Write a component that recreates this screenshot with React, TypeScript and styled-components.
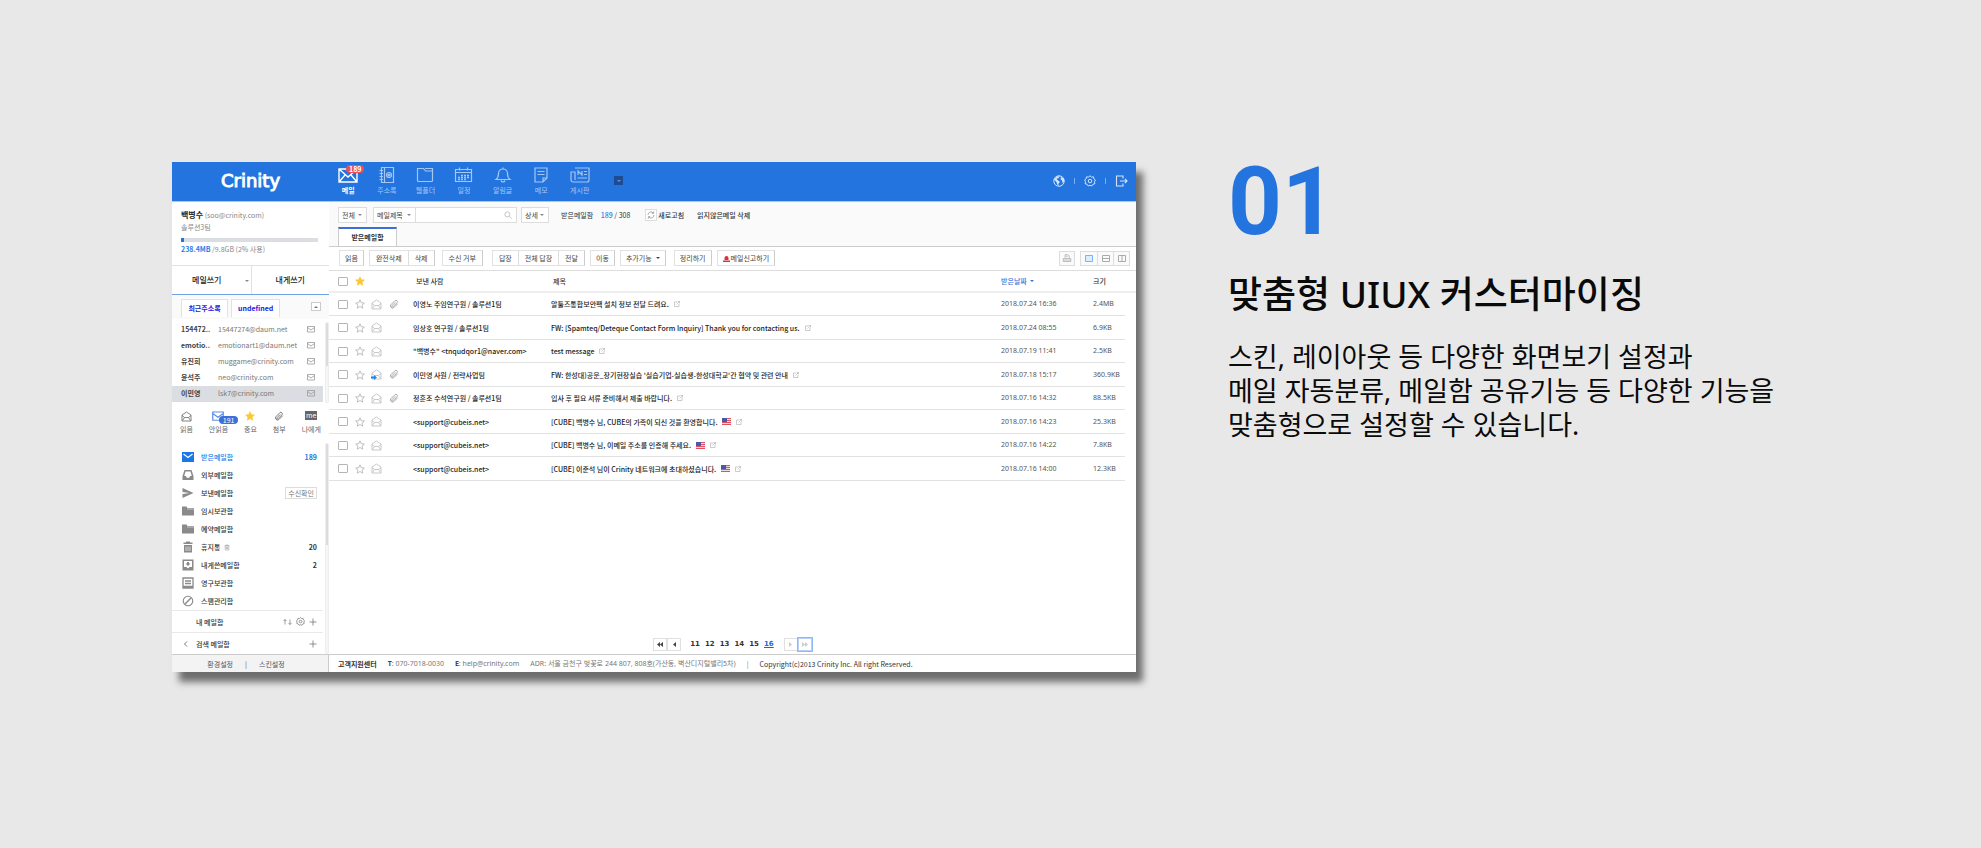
import React from "react";
import styled, { createGlobalStyle, css } from "styled-components";

const GlobalStyle = createGlobalStyle`
  *, *::before, *::after { box-sizing: border-box; }
  body { margin: 0; background: #e8e8e8; }
  body, button, input, select {
    font-family: "Noto Sans CJK KR", "Noto Sans", sans-serif;
  }
  button { cursor: pointer; }
  ul { list-style: none; margin: 0; padding: 0; }
  a { color: inherit; text-decoration: none; }
`;

const blue = "#2374de";
const latin = `"Noto Sans", "Noto Sans CJK KR", sans-serif`;

const Page = styled.main`
  display: grid;
  grid-template-columns: minmax(0, 964fr) minmax(0, 581fr);
  gap: 92px;
  align-items: start;
  min-height: 100vh;
  padding: 162px 172px 96px;
  background: #e8e8e8;
`;

const Frame = styled.section`
  display: grid;
  grid-template-columns: 157px minmax(0, 1fr);
  grid-template-rows: 40px minmax(452px, auto) 18px;
  background: #fff;
  box-shadow: 7px 10px 7px rgba(0, 0, 0, 0.53);
  font-size: 7px;
  line-height: 10px;
  color: #333;
  white-space: nowrap;
`;

/* ---------- top bar ---------- */

const TopBar = styled.header`
  grid-column: 1 / -1;
  display: flex;
  background: ${blue};
  border-bottom: 1px solid #a9c9f2;
`;

const Brand = styled.a`
  width: 157px;
  display: flex;
  align-items: center;
  justify-content: center;
  padding-bottom: 2px;
  font-family: "DejaVu Sans", sans-serif;
  font-size: 18px;
  line-height: 20px;
  color: #fff;
  -webkit-text-stroke: 1px #fff;
`;

const MainMenu = styled.nav`
  display: flex;
  width: 270px;
`;

const MenuLink = styled.a<{ $active?: boolean }>`
  position: relative;
  flex: 1;
  display: flex;
  flex-direction: column;
  align-items: center;
  gap: 2px;
  padding-top: 5px;
  color: ${(p) => (p.$active ? "#fff" : "#a4c6f3")};
  font-weight: ${(p) => (p.$active ? 700 : 400)};
`;

const RedBadge = styled.span`
  position: absolute;
  top: 3px;
  left: 17px;
  padding: 0 3px;
  border-radius: 4px;
  background: #e8505b;
  color: #fff;
  font-weight: 700;
  line-height: 8px;
`;

const MoreButton = styled.button`
  align-self: center;
  display: grid;
  place-items: center;
  width: 9px;
  height: 9px;
  margin: 0 auto 2px 15px;
  padding: 0;
  border: 0;
  background: #1d4c94;
  color: #5f93df;
`;

const Utilities = styled.div`
  display: flex;
  align-items: center;
  gap: 9px;
  padding: 0 8px 2px 0;
`;

const UtilityDivider = styled.i`
  width: 1px;
  height: 6px;
  background: #7eaeee;
`;

const IconButton = styled.button`
  display: grid;
  place-items: center;
  padding: 0;
  border: 0;
  background: none;
  color: inherit;
  font: inherit;
`;

const UtilityButton = styled(IconButton)`
  color: #d5e4f8;
`;

/* ---------- sidebar ---------- */

const Sidebar = styled.aside`
  display: flex;
  flex-direction: column;
  min-width: 0;
`;

const Profile = styled.div`
  height: 63px;
  padding: 7px 11px 0 9px;
  color: #888;
`;

const ProfileLine = styled.div`
  line-height: 12px;
`;

const UserName = styled.strong`
  font-size: 8px;
  color: #222;
`;

const Quota = styled.progress`
  display: block;
  appearance: none;
  width: 100%;
  height: 4px;
  margin: 5px 0 1px;
  border: 0;
  background: #dadee3;
  &::-webkit-progress-bar { background: #dadee3; }
  &::-webkit-progress-value { background: ${blue}; }
`;

const Used = styled.strong`
  color: #2b7fe3;
`;

const WriteBar = styled.div`
  display: grid;
  grid-template-columns: 1fr 1fr;
  height: 30px;
  border-top: 1px solid #e2e2e2;
  border-bottom: 1px solid #6fa3e4;
`;

const WriteButton = styled.button`
  position: relative;
  border: 0;
  border-left: 1px solid #e2e2e2;
  background: #fff;
  padding: 0 0 2px;
  color: #222;
  font-size: 8px;
  font-weight: 500;
  &:first-child { border-left: 0; padding-right: 9px; }
`;

const WriteCaret = styled.span`
  position: absolute;
  right: 2px;
  top: 8px;
  color: #888;
`;

const ContactTabs = styled.div`
  display: flex;
  gap: 3px;
  height: 24px;
  padding: 4px 8px 0 9px;
  background: #fafafa;
  align-items: flex-start;
`;

const ContactTab = styled.button`
  height: 18px;
  min-width: 47px;
  padding: 0 6px 2px;
  border: 1px solid #dfe2e6;
  border-bottom: 0;
  background: #fff;
  color: #1c1ce0;
  font-size: 7px;
  font-weight: 700;
`;

const FoldButton = styled(IconButton)`
  margin: 3px 0 0 auto;
  width: 10px;
  height: 9px;
  border: 1px solid #ccc;
  background: #fff;
  color: #777;
`;

const Scroller = styled.div<{ $thumb: number }>`
  display: grid;
  grid-template-columns: minmax(0, 1fr) 4px;
  column-gap: 2px;
  &::after {
    content: "";
    border: 1px solid #eee;
    border-radius: 2px;
    background: linear-gradient(#dcdcdc, #dcdcdc) no-repeat top / 100% ${(p) => p.$thumb}px, #f6f6f6;
  }
`;

const ContactScroller = styled(Scroller)`
  height: 84px;
  padding-top: 3px;
`;

const ContactRow = styled.li<{ $selected?: boolean }>`
  display: grid;
  grid-template-columns: 37px 1fr 10px;
  align-items: center;
  height: 16px;
  padding: 0 7px 2px 9px;
  background: ${(p) => (p.$selected ? "#dadde1" : "transparent")};
  color: #777;
  b { color: #444; }
  button { color: #999; }
`;

const Filters = styled.div`
  display: flex;
  justify-content: space-between;
  height: 40px;
  padding: 8px 8px 0;
`;

const FilterButton = styled.button`
  position: relative;
  display: flex;
  flex-direction: column;
  align-items: center;
  justify-content: space-between;
  height: 23px;
  padding: 0;
  border: 0;
  background: none;
  color: #666;
  font-size: 7px;
  line-height: 10px;
`;

const UnreadTone = styled.span`
  display: flex;
  color: #5a8de6;
`;

const MeTag = styled.span`
  width: 12px;
  background: #666;
  color: #fff;
  line-height: 9px;
`;

const BlueBadge = styled.span`
  position: absolute;
  top: 5px;
  left: 10px;
  padding: 0 4px;
  border-radius: 4px;
  background: #3a6fdc;
  color: #fff;
  line-height: 8px;
`;

const FolderScroller = styled(Scroller)`
  flex: 1;
`;

const FolderList = styled.ul`
  padding-top: 5px;
  height: 167px;
`;

const FolderLink = styled.a<{ $active?: boolean }>`
  display: flex;
  align-items: center;
  gap: 7px;
  height: 18px;
  padding: 0 6px 0 10px;
  font-weight: 500;
  color: ${(p) => (p.$active ? "#1a78e6" : "#333")};
`;

const FolderIcon = styled.span<{ $active?: boolean }>`
  display: flex;
  color: ${(p) => (p.$active ? "#1a78e6" : "#8a8a8a")};
`;

const FolderName = styled.span`
  display: flex;
  align-items: center;
  gap: 4px;
  margin-right: auto;
`;

const ReceiptTag = styled.span`
  padding: 0 2px;
  border: 1px solid #ddd;
  color: #777;
  font-weight: 400;
`;

const GroupRow = styled.div`
  display: flex;
  align-items: center;
  gap: 4px;
  height: 22px;
  padding: 0 6px 0 11px;
  border-top: 1px solid #e8e8e8;
  font-weight: 500;
  color: #777;
`;

const GroupName = styled.span`
  margin-right: auto;
  color: #333;
`;

const Fold = styled.span`
  width: 9px;
  display: flex;
`;

const SideFooter = styled.div`
  display: flex;
  align-items: center;
  justify-content: center;
  gap: 12px;
  padding: 0 8px 0 0;
  border-top: 1px solid #ccc;
  border-right: 1px solid #ccc;
  background: #f3f3f3;
  color: #555;
`;

/* ---------- mail list ---------- */

const Content = styled.section`
  display: flex;
  flex-direction: column;
  min-width: 0;
`;

const SearchArea = styled.div`
  height: 45px;
  padding: 5px 9px 0;
  background: #fafafa;
  border-bottom: 1px solid #ccc;
`;

const SearchRow = styled.form`
  display: flex;
  align-items: center;
  height: 16px;
`;

const SelectBox = styled.label<{ $width: number }>`
  position: relative;
  display: flex;
  align-items: flex-start;
  width: ${(p) => p.$width}px;
  height: 16px;
  border: 1px solid #ddd;
  background: #fff;
  color: #888;
  svg { position: absolute; right: 4px; top: 5px; pointer-events: none; }
  select {
    appearance: none;
    width: 100%;
    height: 13px;
    border: 0;
    padding: 0 3px;
    background: transparent;
    font-size: 7px;
    color: #444;
  }
`;

const SearchField = styled.label`
  display: flex;
  align-items: center;
  width: 101px;
  height: 16px;
  margin-right: 4px;
  padding-right: 4px;
  border: 1px solid #ddd;
  border-left: 0;
  background: #fff;
  color: #aaa;
  input {
    flex: 1;
    min-width: 0;
    border: 0;
    outline: 0;
    padding: 0 4px;
    font-size: 7px;
    background: none;
  }
`;

const Gap = styled.span`
  width: 6px;
`;

const Count = styled.span`
  margin: 0 15px 0 12px;
  b { margin-left: 6px; font-weight: 500; color: #2b84e0; }
`;

const RefreshButton = styled(IconButton)`
  display: flex;
  align-items: center;
  gap: 1px;
  margin-right: 13px;
  font-weight: 500;
  span {
    display: grid;
    place-items: center;
    width: 12px;
    height: 12px;
    border: 1px solid #ddd;
    background: #fff;
    color: #888;
  }
`;

const TextButton = styled(IconButton)`
  font-weight: 500;
`;

const MailTab = styled.button`
  display: block;
  width: 59px;
  height: 19px;
  margin-top: 4px;
  padding: 0 0 1px;
  border: 1px solid #ccc;
  border-top: 2px solid #3d6fd8;
  border-bottom: 0;
  background: #fff;
  color: #333;
  font-size: 7px;
  font-weight: 700;
`;

const ActionBar = styled.div`
  display: flex;
  align-items: center;
  gap: 5px;
  height: 24px;
  padding: 0 6px 1px 10px;
  border-bottom: 1px solid #ddd;
`;

const ActionGroup = styled.div<{ $after?: number; $roomy?: boolean }>`
  display: flex;
  margin-right: ${(p) => p.$after ?? 0}px;
  border: 1px solid #e2e2e2;
  border-right-color: #ccc;
  button { padding: 0 ${(p) => (p.$roomy ? 6 : 5)}px; }
`;

const ActionButton = styled.button`
  display: flex;
  align-items: center;
  gap: 1px;
  height: 14px;
  border: 0;
  background: #fff;
  color: #444;
  font-size: 7px;
  line-height: 10px;
  & + & { border-left: 1px solid #ddd; }
`;

const ViewSwitch = styled.div<{ $first?: boolean }>`
  display: flex;
  margin-left: ${(p) => (p.$first ? "auto" : "0")};
  border: 1px solid #ddd;
`;

const ViewButton = styled.button<{ $on?: boolean }>`
  display: grid;
  place-items: center;
  width: ${(p) => (p.$on === undefined ? 14 : 16)}px;
  height: 13px;
  padding: 0;
  border: 0;
  background: #fafafa;
  color: ${(p) => (p.$on ? "#74b5fb" : "#aaa")};
  & + & { border-left: 1px solid #ddd; }
`;

const TableWrap = styled.div`
  flex: 1;
`;

const MailTable = styled.table`
  width: 100%;
  table-layout: fixed;
  border-collapse: separate;
  border-spacing: 0;
  th, td { padding: 0; text-align: left; }
  th { height: 22px; font-weight: 500; border-bottom: 2px solid #eee; }
`;

const Row = styled.tr`
  height: 24px;
  &:nth-child(odd) { height: 23px; }
  td { border-bottom: 1px solid #e2e2e2; color: #555; }
  td:last-child { border: 0; }
`;

const NumberCell = styled.td`
  font-family: ${latin};
`;

const Center = styled.span`
  display: flex;
  align-items: center;
  height: 12px;
  color: #bbb;
`;

const Check = styled.input`
  display: block;
  appearance: none;
  width: 10px;
  height: 9px;
  margin: 0;
  border: 1px solid #b5b5b5;
  border-radius: 1px;
  background: #fff;
`;

const MailLink = styled.a`
  display: flex;
  align-items: center;
  gap: 5px;
  color: #222;
  font-weight: 500;
`;

const SortButton = styled(IconButton)`
  display: flex;
  align-items: center;
  gap: 3px;
  color: #3d6fd8;
`;

const Pager = styled.nav`
  display: flex;
  justify-content: center;
  align-items: center;
  gap: 5px;
  height: 14px;
  margin-bottom: 3px;
  font-family: "DejaVu Sans", sans-serif;
  font-weight: 700;
`;

const PageButtons = styled.div`
  display: flex;
  margin: 0 4px 0 0;
  &:last-child { margin: 0 0 0 5px; }
`;

const PageButton = styled.button<{ $off?: boolean; $focus?: boolean }>`
  display: grid;
  place-items: center;
  width: 14px;
  height: 13px;
  padding: 0;
  border: 1px solid #e0e0e0;
  background: #fff;
  color: ${(p) => (p.$off ? "#ccc" : "#444")};
  ${(p) => p.$focus && css`outline: 1px solid #8fb8f5; border-color: #b5d0fa;`}
`;

const PageLink = styled.a<{ $current?: boolean }>`
  color: ${(p) => (p.$current ? "#1a66d6" : "#333")};
  text-decoration: ${(p) => (p.$current ? "underline" : "none")};
`;

const Footer = styled.footer`
  display: flex;
  align-items: center;
  gap: 11px;
  padding-left: 9px;
  border-top: 1px solid #ccc;
  color: #777;
  strong { color: #333; }
  b { color: #444; }
`;

const Contact = styled.span`
  font-family: ${latin};
`;

const Copyright = styled.span`
  color: #333;
`;

/* ---------- right-hand copy ---------- */

const Copy = styled.section`
  font-family: ${latin};
  color: #0a0a0a;
`;

const Step = styled.p`
  margin: 0;
  font-family: Roboto, "Noto Sans", sans-serif;
  font-size: 94px;
  line-height: 80px;
  font-weight: 700;
  color: ${blue};
`;

const Title = styled.h2`
  margin: 26px 0 0;
  font-size: 37px;
  line-height: 52px;
  font-weight: 500;
  white-space: nowrap;
`;

const Body = styled.p`
  margin: 20px 0 0;
  font-size: 27px;
  line-height: 34px;
  white-space: nowrap;
`;

/* ---------- icons ---------- */

type IconProps = { w?: number; h?: number; box?: string; children: React.ReactNode; fill?: boolean; sw?: number };
const Icon = ({ w = 12, h = 12, box = "0 0 24 24", children, fill, sw = 2 }: IconProps) => (
  <svg width={w} height={h} viewBox={box} aria-hidden="true"
    fill={fill ? "currentColor" : "none"} stroke={fill ? "none" : "currentColor"} strokeWidth={sw}>
    {children}
  </svg>
);

const Caret = ({ up }: { up?: boolean }) => (
  <Icon w={4} h={4} box="0 0 8 8" fill><path d={up ? "M0 6h8L4 2z" : "M0 2h8L4 6z"} /></Icon>
);
const menuBox = { w: 20, h: 16, box: "0 0 20 16", sw: 1.2 };
const menuIcons: Record<string, React.ReactNode> = {
  mail: <Icon {...menuBox} sw={1.4}><path d="M1 2h18v13H1zM1 2l9 8 9-8M1 15l6-7M19 15l-6-7" /></Icon>,
  book: <Icon {...menuBox}><path d="M4.500 .5h12v15h-12zM7.500 .5v15M2.500 3.500h3.500M2.500 6.500h3.500M2.500 9.500h3.500M2.500 12.500h3.500" /><circle cx="12" cy="8" r="2.500" /><circle cx="12" cy="8" r="1" fill="currentColor" /></Icon>,
  folder: <Icon {...menuBox}><path d="M2.500 1.500h6l2 2.500h7v9.500a1 1 0 0 1-1 1h-13a1 1 0 0 1-1-1zM10 1.500h7.500v2.500" /></Icon>,
  calendar: <Icon {...menuBox}><path d="M1.500 2.500h16v12h-16zM1.500 5.500h16M5.500 .5v3M13.500 .5v3" /><path d="M7 8.500h9M4 10.500h12M4 12.500h9" strokeDasharray="2 1" strokeWidth="1.300" /></Icon>,
  bell: <Icon {...menuBox}><path d="M3 12.500h14c-2-1.500-2.500-3-2.500-6C14.500 3.500 12.500 2 10 2S5.500 3.500 5.500 6.500c0 3-.5 4.500-2.500 6zM10 2V.5M8 13.500c.5 2 3.500 2 4 0" /></Icon>,
  memo: <Icon {...menuBox}><path d="M4 1h12v10l-4 4H4zM16 11h-4v4M6.500 4.500h7M6.500 7.500h7" /></Icon>,
  board: <Icon {...menuBox}><path d="M5 1h14v12a2 2 0 0 1-2 2H3a2 2 0 0 1-2-2V5h4v8M8 8V4l4 4V4M14 4.500h3M14 7.500h3M7.500 11h9.500" /></Icon>,
};
const Letter = () => (
  <Icon w={11} h={11} box="0 0 22 22"><path d="M2 8l9-6 9 6v12H2zM2 9l5 4h8l5-4M7 13l-4 6M15 13l4 6" strokeWidth="1.600" /></Icon>
);
const Envelope = ({ w = 8, h = 7 }: { w?: number; h?: number }) => (
  <Icon w={w} h={h} box="0 0 16 14" sw={1.6}><path d="M1 1h14v11H1zM1 3l7 5 7-5" /></Icon>
);
const starPath = "M12 2l3 7 7.500.7-5.700 5 1.700 7.300-6.500-4-6.500 4 1.700-7.300-5.700-5L9 9z";
const Star = ({ on }: { on?: boolean }) => (
  <svg width="10" height="10" viewBox="0 0 24 24" aria-hidden="true" fill={on ? "#fbc934" : "none"} stroke={on ? "#fbc934" : "#aaa"} strokeWidth="1.800"><path d={starPath} /></svg>
);
const Clip = () => (
  <Icon w={10} h={11}><path d="M21 10l-9.500 9.500a5 5 0 0 1-7-7L14 3a3.500 3.500 0 0 1 5 5l-9.500 9.500a1.700 1.700 0 0 1-2.500-2.500L15 7" /></Icon>
);
const Gear = ({ s = 12 }: { s?: number }) => (
  <Icon w={s} h={s}><path d="M12 1.500l3 2.500 4-.2.8 3.900 3 2.300-1.800 3.500.8 3.900-3.800 1.100L15.500 22 12 20.500 8.500 22 6 18.500l-3.800-1.100.8-3.900L1.200 10l3-2.300L5 3.800l4 .2z" /><circle cx="12" cy="12" r="3.500" /></Icon>
);
const Popup = () => (
  <Icon w={6} h={6} box="0 0 12 12" sw={1.2}><path d="M6 2H1v9h9V6M7 1h4v4M11 1L5 7" stroke="#aaa" /></Icon>
);
const Flag = () => (
  <svg width="9" height="7" viewBox="0 0 18 14" role="img" aria-label="US">
    <path d="M0 0h18v14H0z" fill="#f4d9dc" />
    <path d="M0 1h18M0 5h18M0 9h18M0 13h18" stroke="#e0525f" strokeWidth="2" />
    <path d="M0 0h10v8H0z" fill="#4b57a8" />
  </svg>
);
const Plus = () => <Icon w={8} h={8} box="0 0 16 16" sw={1.6}><path d="M8 1v14M1 8h14" /></Icon>;

const folderIcons: Record<string, React.ReactNode> = {
  inbox: <Icon fill><path d="M0 2h24v20H0z" /><path d="M3 6l9 7 9-7" fill="none" stroke="#fff" strokeWidth="2.500" /></Icon>,
  outside: <Icon fill><path d="M5 2h14l4 12v8H1v-8zM7 5L4.500 14H8a4 4 0 0 0 8 0h3.500L17 5z" fillRule="evenodd" /></Icon>,
  sent: <Icon fill><path d="M1 2l22 10L1 22v-8l14-2-14-2z" /></Icon>,
  folder: <Icon fill><path d="M0 3h9l2 3h13v15H0z" /><path d="M10 8h14" stroke="#fff" strokeWidth="1" /></Icon>,
  trash: <Icon fill><path d="M3 3h5V1h8v2h5v3H3zM4 8h16v15H4z" /><path d="M8 11v9M12 11v9M16 11v9" stroke="#fff" strokeWidth="1.300" /></Icon>,
  self: <Icon fill><path d="M1 1h22v22H1zM4 4v12h5l3 3 3-3h5V4zM10 6h4v3h3l-5 5-5-5h3z" fillRule="evenodd" /></Icon>,
  archive: <Icon sw={2.6}><path d="M2 2h20v20H2zM6 8h12M6 13h12M3 19h18" /></Icon>,
  spam: <Icon sw={2.2}><circle cx="12" cy="12" r="9.500" /><path d="M6 18L18 6" strokeWidth="3" /></Icon>,
};

/* ---------- data ---------- */

const menu = [
  ["mail", "메일"], ["book", "주소록"], ["folder", "웹폴더"], ["calendar", "일정"],
  ["bell", "알림글"], ["memo", "메모"], ["board", "게시판"],
];
const contacts = [
  ["154472..", "15447274@daum.net"], ["emotio..", "emotionart1@daum.net"],
  ["유진희", "muggame@crinity.com"], ["윤석주", "neo@crinity.com"], ["이민영", "lsk7@crinity.com"],
];
const folders: { icon: string; name: string; count?: number; tag?: string }[] = [
  { icon: "inbox", name: "받은메일함", count: 189 },
  { icon: "outside", name: "외부메일함" },
  { icon: "sent", name: "보낸메일함", tag: "수신확인" },
  { icon: "folder", name: "임시보관함" },
  { icon: "folder", name: "예약메일함" },
  { icon: "trash", name: "휴지통", count: 20 },
  { icon: "self", name: "내게쓴메일함", count: 2 },
  { icon: "archive", name: "영구보관함" },
  { icon: "spam", name: "스팸관리함" },
];
type Mail = { from: string; subject: string; date: string; size: string; clip?: boolean; fwd?: boolean; flag?: boolean };
const mails: Mail[] = [
  { from: "이영노 주임연구원 / 솔루션1팀", subject: "알툴즈통합보안팩 설치 정보 전달 드려요.", date: "2018.07.24 16:36", size: "2.4MB", clip: true },
  { from: "임상호 연구원 / 솔루션1팀", subject: "FW: [Spamteq/Deteque Contact Form Inquiry] Thank you for contacting us.", date: "2018.07.24 08:55", size: "6.9KB" },
  { from: "\"백병수\" <tnqudqor1@naver.com>", subject: "test message", date: "2018.07.19 11:41", size: "2.5KB" },
  { from: "이민영 사원 / 전략사업팀", subject: "FW: 한성대)공문_장기현장실습 '실습기업-실습생-한성대학교'간 협약 및 관련 안내", date: "2018.07.18 15:17", size: "360.9KB", clip: true, fwd: true },
  { from: "정훈조 수석연구원 / 솔루션1팀", subject: "입사 후 필요 서류 준비해서 제출 바랍니다.", date: "2018.07.16 14:32", size: "88.5KB", clip: true },
  { from: "<support@cubeis.net>", subject: "[CUBE] 백병수 님, CUBE의 가족이 되신 것을 환영합니다.", date: "2018.07.16 14:23", size: "25.3KB", flag: true },
  { from: "<support@cubeis.net>", subject: "[CUBE] 백병수 님, 이메일 주소를 인증해 주세요.", date: "2018.07.16 14:22", size: "7.8KB", flag: true },
  { from: "<support@cubeis.net>", subject: "[CUBE] 이준석 님이 Crinity 네트워크에 초대하셨습니다.", date: "2018.07.16 14:00", size: "12.3KB", flag: true },
];

/* ---------- sections ---------- */

const Header = () => (
  <TopBar>
    <Brand href="#">Crinity</Brand>
    <MainMenu>
      {menu.map(([icon, label], i) => (
        <MenuLink key={icon} href="#" $active={i === 0}>
          {menuIcons[icon]}
          {label}
          {i === 0 && <RedBadge>189</RedBadge>}
        </MenuLink>
      ))}
    </MainMenu>
    <MoreButton aria-label="더보기"><Caret /></MoreButton>
    <Utilities>
      <UtilityButton aria-label="언어">
        <Icon><circle cx="12" cy="12" r="10.500" /><path d="M2 9l5 5 1 4 3 4v-5l3-3-5-4-2-2 4-2 3-4-6 1zM16 4l-1 4 3 3 1 5 3-3V8z" fill="currentColor" stroke="none" /></Icon>
      </UtilityButton>
      <UtilityDivider />
      <UtilityButton aria-label="설정"><Gear /></UtilityButton>
      <UtilityDivider />
      <UtilityButton aria-label="로그아웃">
        <Icon w={13} sw={2.2}><path d="M15 7V2H2v20h13v-5M9 12h14M19 8l4 4-4 4" /></Icon>
      </UtilityButton>
    </Utilities>
  </TopBar>
);

const Side = () => (
  <Sidebar>
    <Profile>
      <ProfileLine><UserName>백병수</UserName> (soo@crinity.com)</ProfileLine>
      <ProfileLine>솔루션3팀</ProfileLine>
      <Quota value={2} max={100} aria-label="메일 용량" />
      <ProfileLine><Used>238.4MB</Used> /9.8GB (2% 사용)</ProfileLine>
    </Profile>
    <WriteBar>
      <WriteButton>메일쓰기<WriteCaret><Caret /></WriteCaret></WriteButton>
      <WriteButton>내게쓰기</WriteButton>
    </WriteBar>
    <ContactTabs>
      <ContactTab>최근주소록</ContactTab>
      <ContactTab>undefined</ContactTab>
      <FoldButton aria-label="접기"><Caret up /></FoldButton>
    </ContactTabs>
    <ContactScroller $thumb={43}>
      <ul>
        {contacts.map(([name, mail], i) => (
          <ContactRow key={mail} $selected={i === 4}>
            <b>{name}</b>
            <span>{mail}</span>
            <IconButton aria-label={`${name}에게 쓰기`}><Envelope /></IconButton>
          </ContactRow>
        ))}
      </ul>
    </ContactScroller>
    <Filters>
      <FilterButton><Letter />읽음</FilterButton>
      <FilterButton><UnreadTone><Envelope w={12} h={11} /></UnreadTone><BlueBadge>191</BlueBadge>안읽음</FilterButton>
      <FilterButton><Star on />중요</FilterButton>
      <FilterButton><Clip />첨부</FilterButton>
      <FilterButton><MeTag>me</MeTag>나에게</FilterButton>
    </Filters>
    <FolderScroller $thumb={101}>
      <div>
        <FolderList>
          {folders.map((f, i) => (
            <li key={f.name}>
              <FolderLink href="#" $active={i === 0}>
                <FolderIcon $active={i === 0}>{folderIcons[f.icon]}</FolderIcon>
                <FolderName>
                  {f.name}
                  {f.icon === "trash" && <Icon w={6} h={7} sw={2.4}><path d="M2 5h20M8 5V2h8v3M5 5v17h14V5M10 9v9M14 9v9" stroke="#999" /></Icon>}
                </FolderName>
                {f.tag && <ReceiptTag>{f.tag}</ReceiptTag>}
                {f.count && <b>{f.count}</b>}
              </FolderLink>
            </li>
          ))}
        </FolderList>
        <GroupRow>
          <Fold />
          <GroupName>내 메일함</GroupName>
          <Icon w={9} h={6} box="0 0 18 12" sw={1.4}><path d="M4 11V1M1 4l3-3 3 3M14 1v10M11 8l3 3 3-3" /></Icon>
          <Gear s={9} />
          <IconButton aria-label="메일함 추가"><Plus /></IconButton>
        </GroupRow>
        <GroupRow>
          <Fold><Icon w={6} h={6} box="0 0 12 12"><path d="M8 1L3 6l5 5" /></Icon></Fold>
          <GroupName>검색 메일함</GroupName>
          <IconButton aria-label="검색 메일함 추가"><Plus /></IconButton>
        </GroupRow>
      </div>
    </FolderScroller>
  </Sidebar>
);

const Forwarded = styled.span`
  position: absolute;
  margin-top: 6px;
  display: flex;
  color: #1a86f0;
`;

const ClipTone = styled.span`
  display: flex;
  color: #999;
`;

const HeadText = styled.span<{ $inset?: boolean }>`
  padding-left: ${(p) => (p.$inset ? 3 : 2)}px;
`;

const CheckSlot = styled.span`
  display: block;
  padding-left: 9px;
`;

const CheckCell = ({ label }: { label: string }) => (
  <CheckSlot><Check type="checkbox" aria-label={label} /></CheckSlot>
);

const MailList = () => (
  <Content>
    <SearchArea>
      <SearchRow>
        <SelectBox $width={29}><select aria-label="범위"><option>전체</option></select><Caret /></SelectBox>
        <Gap />
        <SelectBox $width={43}><select aria-label="검색 항목"><option>메일제목</option></select><Caret /></SelectBox>
        <SearchField>
          <input type="text" aria-label="검색어" />
          <Icon w={8} h={8}><circle cx="10" cy="10" r="7.500" /><path d="M16 16l7 7" /></Icon>
        </SearchField>
        <SelectBox $width={28}><select aria-label="상세 검색"><option>상세</option></select><Caret /></SelectBox>
        <Count>받은메일함 <b>189</b> / 308</Count>
        <RefreshButton type="button">
          <span><Icon w={8} h={8}><path d="M3 12a9 9 0 0 1 16-6M21 12a9 9 0 0 1-16 6M20 1v6h-6M4 23v-6h6" /></Icon></span>
          새로고침
        </RefreshButton>
        <TextButton type="button">읽지않은메일 삭제</TextButton>
      </SearchRow>
      <MailTab>받은메일함</MailTab>
    </SearchArea>
    <ActionBar>
      <ActionGroup><ActionButton>읽음</ActionButton></ActionGroup>
      <ActionGroup $after={2} $roomy><ActionButton>완전삭제</ActionButton><ActionButton>삭제</ActionButton></ActionGroup>
      <ActionGroup $after={4} $roomy><ActionButton>수신 거부</ActionButton></ActionGroup>
      <ActionGroup $roomy><ActionButton>답장</ActionButton><ActionButton>전체 답장</ActionButton><ActionButton>전달</ActionButton></ActionGroup>
      <ActionGroup><ActionButton>이동</ActionButton></ActionGroup>
      <ActionGroup $after={3}><ActionButton>추가기능&nbsp;&nbsp;<Caret /></ActionButton></ActionGroup>
      <ActionGroup><ActionButton>정리하기</ActionButton></ActionGroup>
      <ActionGroup>
        <ActionButton>
          <svg width="7" height="7" viewBox="0 0 14 14" aria-hidden="true" fill="#d8323a"><path d="M3 10V6a4 4 0 0 1 8 0v4zM0 11h14v3H0z" /></svg>
          메일신고하기
        </ActionButton>
      </ActionGroup>
      <ViewSwitch $first>
        <ViewButton aria-label="인쇄"><Icon w={10} h={9} sw={2}><path d="M7 10V2h8l3 3v5M2 20v-8h20v8zM2 16h20M9 6h5" /></Icon></ViewButton>
      </ViewSwitch>
      <ViewSwitch>
        <ViewButton $on aria-label="목록"><Icon w={8} h={7} box="0 0 8 7" sw={1}><path d="M.5 .5h7v6h-7z" fill="#dcedfe" /></Icon></ViewButton>
        <ViewButton $on={false} aria-label="상하 분할"><Icon w={8} h={7} box="0 0 8 7" sw={1}><path d="M.5 .5h7v6h-7zM.5 3.500h7" /></Icon></ViewButton>
        <ViewButton $on={false} aria-label="좌우 분할"><Icon w={8} h={7} box="0 0 8 7" sw={1}><path d="M.5 .5h7v6h-7zM4 .5v6" /></Icon></ViewButton>
      </ViewSwitch>
    </ActionBar>
    <TableWrap>
      <MailTable>
        <colgroup>
          <col style={{ width: 26 }} /><col style={{ width: 16 }} /><col style={{ width: 18 }} /><col style={{ width: 24 }} />
          <col style={{ width: 138 }} /><col /><col style={{ width: 92 }} /><col style={{ width: 32 }} /><col style={{ width: 11 }} />
        </colgroup>
        <thead>
          <tr>
            <th><CheckCell label="전체 선택" /></th>
            <th><Center><Star on /></Center></th>
            <th /><th />
            <th><HeadText $inset>보낸 사람</HeadText></th>
            <th><HeadText>제목</HeadText></th>
            <th><SortButton>받은날짜 <Caret /></SortButton></th>
            <th>크기</th>
            <th />
          </tr>
        </thead>
        <tbody>
          {mails.map((m) => (
            <Row key={m.date}>
              <td><CheckCell label={m.subject} /></td>
              <td><Center><Star /></Center></td>
              <td><Center><Letter />{m.fwd && <Forwarded><Icon w={6} h={5} box="0 0 12 10" fill><path d="M0 3h6V0l6 5-6 5V7H0z" /></Icon></Forwarded>}</Center></td>
              <td><Center>{m.clip && <ClipTone><Clip /></ClipTone>}</Center></td>
              <td><MailLink href="#">{m.from}</MailLink></td>
              <td><MailLink href="#">{m.subject}{m.flag && <Flag />}<Popup /></MailLink></td>
              <NumberCell>{m.date}</NumberCell>
              <NumberCell>{m.size}</NumberCell>
              <td />
            </Row>
          ))}
        </tbody>
      </MailTable>
    </TableWrap>
    <Pager>
      <PageButtons>
        <PageButton aria-label="처음"><Icon w={6} h={5} box="0 0 12 10" fill><path d="M6 0v10L0 5zM12 0v10L6 5z" /></Icon></PageButton>
        <PageButton aria-label="이전"><Icon w={5} h={5} box="0 0 10 10" fill><path d="M8 0v10L2 5z" /></Icon></PageButton>
      </PageButtons>
      {[11, 12, 13, 14, 15, 16].map((n) => <PageLink key={n} href="#" $current={n === 16}>{n}</PageLink>)}
      <PageButtons>
        <PageButton $off aria-label="다음"><Icon w={5} h={5} box="0 0 10 10" fill><path d="M2 0v10l6-5z" /></Icon></PageButton>
        <PageButton $off $focus aria-label="마지막"><Icon w={6} h={5} box="0 0 12 10" fill><path d="M0 0v10l6-5zM6 0v10l6-5z" /></Icon></PageButton>
      </PageButtons>
    </Pager>
  </Content>
);

export default function App() {
  return (
    <Page>
      <GlobalStyle />
      <Frame>
        <Header />
        <Side />
        <MailList />
        <SideFooter><a href="#">환경설정</a><span>|</span><a href="#">스킨설정</a></SideFooter>
        <Footer>
          <strong>고객지원센터</strong>
          <Contact><b>T</b>: 070-7018-0030</Contact>
          <Contact><b>E</b>: help@crinity.com</Contact>
          <Contact>ADR: 서울 금천구 벚꽃로 244 807, 808호(가산동, 벽산디지털밸리5차)</Contact>
          <span>|</span>
          <Copyright>Copyright(c)2013 Crinity Inc. All right Reserved.</Copyright>
        </Footer>
      </Frame>
      <Copy>
        <Step>01</Step>
        <Title>맞춤형 UIUX 커스터마이징</Title>
        <Body>
          스킨, 레이아웃 등 다양한 화면보기 설정과<br />
          메일 자동분류, 메일함 공유기능 등 다양한 기능을<br />
          맞춤형으로 설정할 수 있습니다.
        </Body>
      </Copy>
    </Page>
  );
}
